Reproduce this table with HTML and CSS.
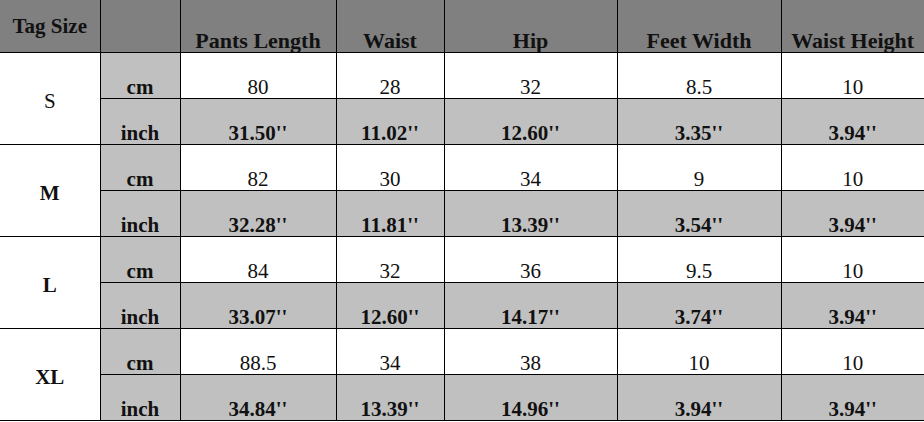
FILE: index.html
```html
<!DOCTYPE html>
<html lang="en">
<head>
<meta charset="utf-8">
<title>Size Chart</title>
<link rel="stylesheet" href="styles.css">
</head>
<body>
<table class="chart">
  <colgroup>
    <col class="c-tag"><col class="c-unit"><col class="c-len"><col class="c-waist"><col class="c-hip"><col class="c-feet"><col class="c-wh">
  </colgroup>
  <thead>
    <tr class="head">
      <th class="tag">Tag Size</th>
      <th></th>
      <th>Pants Length</th>
      <th>Waist</th>
      <th>Hip</th>
      <th>Feet Width</th>
      <th class="last">Waist Height</th>
    </tr>
  </thead>
  <tbody>
    <tr class="cm">
      <td class="size regular" rowspan="2">S</td>
      <td class="unit">cm</td>
      <td>80</td><td>28</td><td>32</td><td>8.5</td><td class="last">10</td>
    </tr>
    <tr class="inch">
      <td class="unit">inch</td>
      <td>31.50''</td><td>11.02''</td><td>12.60''</td><td>3.35''</td><td class="last">3.94''</td>
    </tr>
    <tr class="cm">
      <td class="size" rowspan="2">M</td>
      <td class="unit">cm</td>
      <td>82</td><td>30</td><td>34</td><td>9</td><td class="last">10</td>
    </tr>
    <tr class="inch">
      <td class="unit">inch</td>
      <td>32.28''</td><td>11.81''</td><td>13.39''</td><td>3.54''</td><td class="last">3.94''</td>
    </tr>
    <tr class="cm">
      <td class="size" rowspan="2">L</td>
      <td class="unit">cm</td>
      <td>84</td><td>32</td><td>36</td><td>9.5</td><td class="last">10</td>
    </tr>
    <tr class="inch">
      <td class="unit">inch</td>
      <td>33.07''</td><td>12.60''</td><td>14.17''</td><td>3.74''</td><td class="last">3.94''</td>
    </tr>
    <tr class="cm">
      <td class="size" rowspan="2">XL</td>
      <td class="unit">cm</td>
      <td>88.5</td><td>34</td><td>38</td><td>10</td><td class="last">10</td>
    </tr>
    <tr class="inch">
      <td class="unit">inch</td>
      <td>34.84''</td><td>13.39''</td><td>14.96''</td><td>3.94''</td><td class="last">3.94''</td>
    </tr>
  </tbody>
</table>
</body>
</html>
```
FILE: styles.css
```css
html, body {
  margin: 0;
  padding: 0;
  background: #fff;
  overflow: hidden;
}

.chart {
  border-collapse: collapse;
  table-layout: fixed;
  width: 924px;
  color: #111;
}

.chart th,
.chart td {
  font-family: "Liberation Serif", "DejaVu Serif", serif;
  border: 1px solid #000;
  padding: 0;
  text-align: center;
  vertical-align: bottom;
  line-height: 21px;
  white-space: nowrap;
  overflow: hidden;
}

.c-tag { width: 100px; }
.c-unit { width: 80px; }
.c-len { width: 156px; }
.c-waist { width: 108px; }
.c-hip { width: 173px; }
.c-feet { width: 164px; }
.c-wh { width: 143px; }

.chart tr:first-child th { border-top: none; }
.chart th:first-child,
.chart td.size { border-left: none; }
.chart .last { border-right: none; }

.head th {
  height: 52px;
  background: #808080;
  font-size: 22px;
  font-weight: bold;
  line-height: 22px;
}

.head th.tag {
  font-size: 21px;
  vertical-align: middle;
  padding: 0;
}

.cm td,
.inch td {
  height: 45px;
  font-size: 21px;
}

.inch td {
  background: #c0c0c0;
  font-weight: bold;
}

.chart td.unit {
  background: #c0c0c0;
  font-weight: bold;
}

.chart td.size {
  background: #fff;
  font-weight: bold;
  vertical-align: middle;
  padding: 6px 0 0 0;
}

.chart td.size.regular {
  font-weight: normal;
}
```
